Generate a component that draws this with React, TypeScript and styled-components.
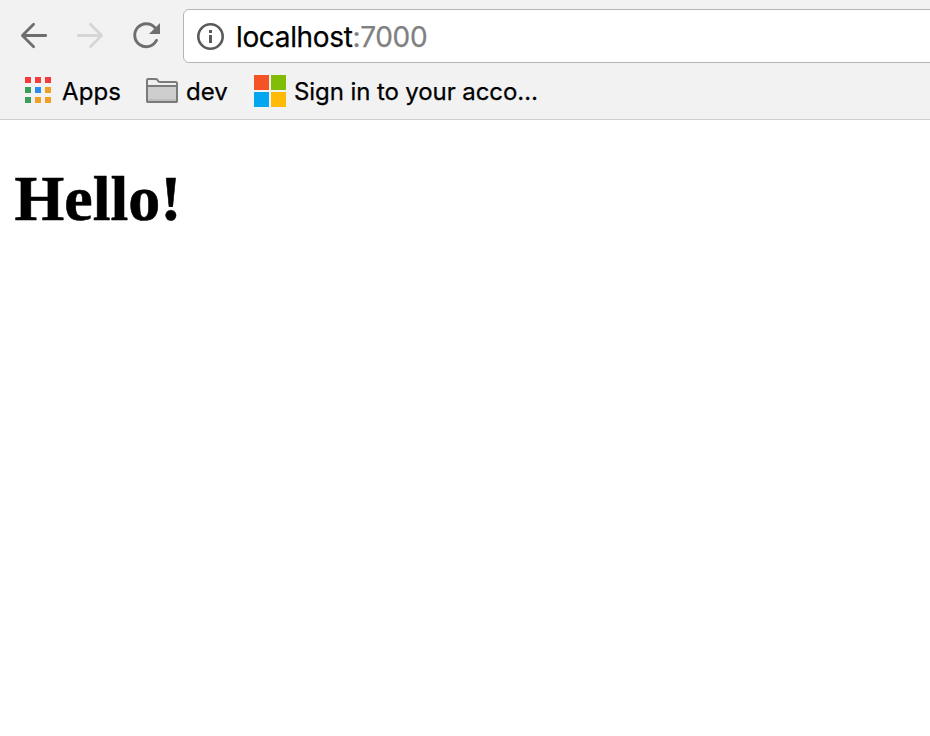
import React from "react";
import styled, { createGlobalStyle } from "styled-components";

const GlobalStyle = createGlobalStyle`
  * { box-sizing: border-box; }
  body { margin: 0; background: #fff; overflow: hidden; }
`;

const Browser = styled.div`
  height: 736px;
  display: flex;
  flex-direction: column;
  overflow: hidden;
  background: #fff;
  font-family: Inter, "Liberation Sans", sans-serif;
`;

const Chrome = styled.header`
  height: 120px;
  flex: none;
  background: #f2f2f2;
  border-bottom: 1px solid #cfcfcf;
`;

const Toolbar = styled.div`
  display: flex;
  padding: 9px 0 0 20px;
  height: 63px;
`;

const NavButton = styled.button<{ $dim?: boolean }>`
  flex: none;
  width: 56px;
  height: 54px;
  padding: 0;
  border: 0;
  background: none;
  color: ${(p) => (p.$dim ? "#d6d6d6" : "#6e6e6e")};
  svg { display: block; }
`;

const AddressBar = styled.div`
  flex: none;
  width: 760px;
  height: 54px;
  margin-left: -5px;
  display: flex;
  align-items: center;
  padding-left: 12px;
  border: 1px solid #b5b5b5;
  border-radius: 6px;
  background: #fff;
`;

const Url = styled.span`
  margin-left: 11px;
  padding-top: 2px;
  font-size: 28px;
  line-height: 34px;
  letter-spacing: -0.35px;
  color: #000;
  -webkit-text-stroke: 0.25px currentColor;
`;

const Port = styled.span`
  color: #808080;
  -webkit-text-stroke: 0.25px currentColor;
`;

const BookmarkBar = styled.nav`
  display: flex;
  align-items: center;
  height: 56px;
  padding-left: 24px;
`;

const Bookmark = styled.a<{ $gap: number; $width: number; $tracking: number }>`
  display: flex;
  flex: none;
  align-items: center;
  gap: ${(p) => p.$gap}px;
  width: ${(p) => p.$width}px;
  font-size: 24px;
  line-height: 30px;
  letter-spacing: ${(p) => p.$tracking}px;
  white-space: nowrap;
  color: #000;
  svg { flex: none; }
`;

const BookmarkLabel = styled.span`
  padding-top: 2px;
  -webkit-text-stroke: 0.25px currentColor;
`;

const Page = styled.main`
  padding: 42px 14.5px;
`;

const Heading = styled.h1`
  margin: 0;
  font: bold 64px/74px "Liberation Serif", serif;
  color: #000;
  -webkit-text-stroke: 0.6px #000;
`;

const APP_DOTS = [
  ["#f53b3b", "#f53b3b", "#f53b3b"],
  ["#3a9f5a", "#2a8df4", "#f0a125"],
  ["#3a9f5a", "#f0a125", "#f0a125"],
];

const ArrowIcon = ({ flip = false }: { flip?: boolean }) => (
  <svg width="28" height="54" viewBox="0 0 28 54" fill="none" stroke="currentColor" strokeWidth="2.8" strokeLinecap="round">
    <g transform={flip ? "translate(28 0)scale(-1 1)" : undefined}>
      <path d="M25.7 26.5H2.6M13.6 15.3L2.4 26.5l11.2 11.2" strokeLinejoin="round" />
    </g>
  </svg>
);

const ReloadIcon = () => (
  <svg width="30" height="54" viewBox="0 0 30 54" fill="none">
    <path d="M24.5 31.4A11.5 11.5 0 1 1 22.8 18.5" stroke="currentColor" strokeWidth="2.9" strokeLinecap="round" />
    <path d="M28 14v11H17z" fill="currentColor" />
  </svg>
);

const InfoIcon = () => (
  <svg width="29" height="28" viewBox="0 0 29 28">
    <circle cx="14.5" cy="14.5" r="12.2" fill="none" stroke="#5a5a5a" strokeWidth="2.6" />
    <path d="M13 8h3v3h-3zM13 13h3v8h-3z" fill="#5a5a5a" />
  </svg>
);

const AppsIcon = () => (
  <svg width="28" height="30" viewBox="0 0 28 30">
    {APP_DOTS.map((row, y) =>
      row.map((fill, x) => <rect key={`${x}-${y}`} x={1 + x * 10} y={1 + y * 10} width="6" height="6" fill={fill} />)
    )}
  </svg>
);

const FolderIcon = () => (
  <svg width="32" height="26" viewBox="0 0 32 26" stroke="#7b7b7b" strokeWidth="2">
    <path d="M1 22.8V2.2Q1 1 2.2 1H9.8Q10.8 1 11.4 1.9L12.5 3.4Q13 4 14 4H29.8Q31 4 31 5.2V22.8Q31 24 29.8 24H2.2Q1 24 1 22.8Z" fill="#efefef" />
    <path d="M1 8H31V22.8Q31 24 29.8 24H2.2Q1 24 1 22.8Z" fill="#cecece" />
    <path d="M2 22H30" stroke="#bdbdbd" strokeWidth="2" />
  </svg>
);

const MicrosoftIcon = () => (
  <svg width="32" height="32" viewBox="0 0 32 32">
    <path d="M0 0h15v15H0z" fill="#f35325" />
    <path d="M17 0h15v15H17z" fill="#81bc06" />
    <path d="M0 17h15v15H0z" fill="#05a6f0" />
    <path d="M17 17h15v15H17z" fill="#ffba08" />
  </svg>
);

export default function App() {
  return (
    <Browser>
      <GlobalStyle />
      <Chrome>
        <Toolbar>
          <NavButton aria-label="Back"><ArrowIcon /></NavButton>
          <NavButton aria-label="Forward" $dim><ArrowIcon flip /></NavButton>
          <NavButton aria-label="Reload"><ReloadIcon /></NavButton>
          <AddressBar>
            <InfoIcon />
            <Url>localhost<Port>:7000</Port></Url>
          </AddressBar>
        </Toolbar>
        <BookmarkBar>
          <Bookmark $gap={10} $width={122} $tracking={0.1}><AppsIcon /><BookmarkLabel>Apps</BookmarkLabel></Bookmark>
          <Bookmark $gap={8} $width={108} $tracking={0}><FolderIcon /><BookmarkLabel>dev</BookmarkLabel></Bookmark>
          <Bookmark $gap={8} $width={290} $tracking={-0.09}><MicrosoftIcon /><BookmarkLabel>Sign in to your acco…</BookmarkLabel></Bookmark>
        </BookmarkBar>
      </Chrome>
      <Page>
        <Heading>Hello!</Heading>
      </Page>
    </Browser>
  );
}
